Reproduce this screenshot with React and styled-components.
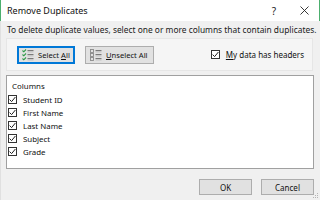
import React from 'react';
import styled, { createGlobalStyle } from 'styled-components';

const GlobalStyle = createGlobalStyle`
  html, body {
    margin: 0;
    padding: 0;
    overflow: hidden;
    background: #f0f0f0;
  }
  * { box-sizing: border-box; }
`;

const Window = styled.div`
  width: 320px;
  height: 200px;
  display: flex;
  flex-direction: column;
  background: #f0f0f0;
  font-family: "Noto Sans", "Open Sans", sans-serif;
  color: #1a1a1a;
  position: relative;
  overflow: hidden;
`;

const TitleBar = styled.div`
  height: 21px;
  flex: none;
  display: flex;
  align-items: center;
  background: #ffffff;
  border-left: 1px solid #4caf6e;
  border-right: 1px solid #4caf6e;
  padding-left: 6px;
`;

const Title = styled.div`
  font-size: 9px;
  flex: 1;
  color: #111;
`;

const TitleIcon = styled.div`
  width: 30px;
  height: 21px;
  display: flex;
  align-items: center;
  justify-content: center;
  font-size: 10px;
  color: #222;
`;

const Body = styled.div`
  flex: 1;
  display: flex;
  flex-direction: column;
  padding: 0 6px 0 5px;
  border-left: 1px solid #e0e0e0;
`;

const Instruction = styled.div`
  font-size: 8.4px;
  height: 16px;
  line-height: 16px;
  padding-left: 1px;
  white-space: nowrap;
  margin-top: 1px;
`;

const Toolbar = styled.div`
  height: 33px;
  display: flex;
  align-items: center;
  gap: 10px;
  padding: 0 8px 0 10px;
  background: #f5f5f5;
  border: 1px solid #e6e6e6;
  margin-right: 1px;
`;

const ToolButton = styled.div`
  height: 18px;
  width: ${(p) => p.$w}px;
  flex: none;
  display: flex;
  align-items: center;
  gap: 4px;
  padding-left: 4px;
  white-space: nowrap;
  background: #e1e1e1;
  border: 1px solid ${(p) => (p.$focused ? '#0078d7' : '#adadad')};
  box-shadow: ${(p) => (p.$focused ? 'inset 0 0 0 1px #0078d7' : 'none')};
  font-size: 7.6px;
  color: #111;
`;

const Spacer = styled.div`
  flex: 1;
`;

const CheckRow = styled.label`
  display: flex;
  align-items: center;
  gap: 6px;
  font-size: ${(p) => p.$size || 7.9}px;
  height: ${(p) => p.$h || 13}px;
  white-space: nowrap;
  color: #111;
`;

const Box = styled.span`
  width: 9px;
  height: 9px;
  border: 1px solid #333;
  background: #fff;
  display: inline-flex;
  align-items: center;
  justify-content: center;
  flex: none;
`;

const Key = styled.span`
  text-decoration: underline;
  text-underline-offset: 1px;
`;

const ListBox = styled.div`
  margin-top: 4px;
  height: 94px;
  background: #ffffff;
  border: 1px solid #a0a0a0;
  padding: 3px 0 0 1px;
  display: flex;
  flex-direction: column;
`;

const ListHeader = styled.div`
  font-size: 7.9px;
  height: 14px;
  line-height: 14px;
  padding-left: 4px;
  color: #111;
`;

const Footer = styled.div`
  flex: 1;
  display: flex;
  justify-content: flex-end;
  align-items: flex-start;
  gap: 9px;
  padding-top: 10px;
`;

const DialogButton = styled.div`
  width: 53px;
  height: 16px;
  display: flex;
  align-items: center;
  justify-content: center;
  background: #e1e1e1;
  border: 1px solid #adadad;
  font-size: 8px;
  color: #111;
`;

const Grip = styled.svg`
  position: absolute;
  right: 1px;
  bottom: 1px;
`;

const Check = () => (
  <svg width="7" height="7" viewBox="0 0 7 7">
    <path d="M0.6 3.6 L2.6 5.6 L6.4 1" fill="none" stroke="#222" strokeWidth="1" />
  </svg>
);

const SelectIcon = () => (
  <svg width="12" height="12" viewBox="0 0 12 12">
    {[1, 5, 9].map((y) => (
      <g key={y}>
        <path d={`M0.5 ${y + 0.5} L1.8 ${y + 1.8} L4 ${y - 0.5}`} fill="none" stroke="#2e9a47" strokeWidth="1.1" />
        <rect x="5.5" y={y} width="6" height="1" fill="#7a7a7a" />
        <rect x="5.5" y={y + 1.5} width="6" height="0.8" fill="#b0b0b0" />
      </g>
    ))}
  </svg>
);

const UnselectIcon = () => (
  <svg width="12" height="12" viewBox="0 0 12 12">
    {[0.5, 4.5, 8.5].map((y) => (
      <g key={y}>
        <rect x="0.5" y={y} width="3" height="3" fill="none" stroke="#8a8a8a" strokeWidth="0.9" />
        <rect x="5.5" y={y + 0.5} width="6" height="1" fill="#7a7a7a" />
        <rect x="5.5" y={y + 2} width="6" height="0.8" fill="#b0b0b0" />
      </g>
    ))}
  </svg>
);

const columns = ['Student ID', 'First Name', 'Last Name', 'Subject', 'Grade'];

const App = () => (
  <>
    <GlobalStyle />
    <Window>
      <TitleBar>
        <Title>Remove Duplicates</Title>
        <TitleIcon>?</TitleIcon>
        <TitleIcon>
          <svg width="9" height="9" viewBox="0 0 9 9">
            <path d="M0.5 0.5 L8.5 8.5 M8.5 0.5 L0.5 8.5" stroke="#222" strokeWidth="0.9" />
          </svg>
        </TitleIcon>
      </TitleBar>
      <Body>
        <Instruction>To delete duplicate values, select one or more columns that contain duplicates.</Instruction>
        <Toolbar>
          <ToolButton $w={58} $focused>
            <SelectIcon />
            <span>Select <Key>A</Key>ll</span>
          </ToolButton>
          <ToolButton $w={69}>
            <UnselectIcon />
            <span><Key>U</Key>nselect All</span>
          </ToolButton>
          <Spacer />
          <CheckRow $h={18} $size={8}>
            <Box><Check /></Box>
            <span><Key>M</Key>y data has headers</span>
          </CheckRow>
        </Toolbar>
        <ListBox>
          <ListHeader>Columns</ListHeader>
          {columns.map((c) => (
            <CheckRow key={c}>
              <Box><Check /></Box>
              <span>{c}</span>
            </CheckRow>
          ))}
        </ListBox>
        <Footer>
          <DialogButton>OK</DialogButton>
          <DialogButton>Cancel</DialogButton>
        </Footer>
      </Body>
      <Grip width="6" height="6" viewBox="0 0 6 6">
        <rect x="4" y="0" width="1" height="1" fill="#b5b5b5" />
        <rect x="2" y="2" width="1" height="1" fill="#b5b5b5" />
        <rect x="4" y="2" width="1" height="1" fill="#b5b5b5" />
        <rect x="0" y="4" width="1" height="1" fill="#b5b5b5" />
        <rect x="2" y="4" width="1" height="1" fill="#b5b5b5" />
        <rect x="4" y="4" width="1" height="1" fill="#b5b5b5" />
      </Grip>
    </Window>
  </>
);

export default App;
